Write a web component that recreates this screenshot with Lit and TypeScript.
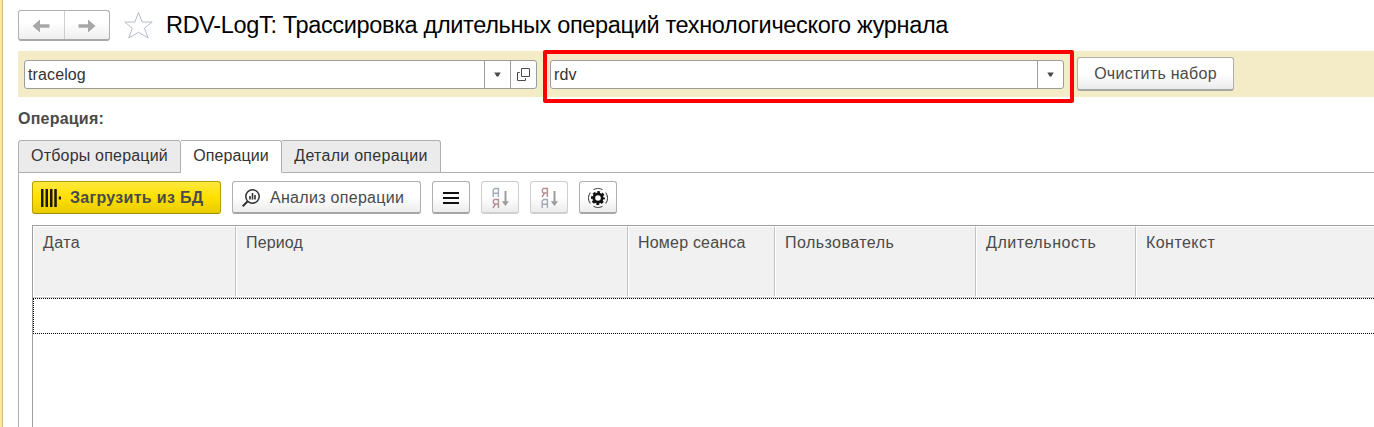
import { LitElement, html, css, svg } from "lit";
import { customElement } from "lit/decorators.js";

const columns = [
  { title: "Дата", cls: "c-date" },
  { title: "Период", cls: "c-period" },
  { title: "Номер сеанса", cls: "c-session" },
  { title: "Пользователь", cls: "c-user" },
  { title: "Длительность", cls: "c-duration" },
  { title: "Контекст", cls: "c-context" },
];

const caret = html`<svg class="caret" width="7" height="5" viewBox="0 0 7 5"><path d="M0.3 0.5h6.4L4.4 4.5H2.6z" fill="#4a4a4a" /></svg>`;

const sortIcon = (top: string, bottom: string) => {
  const a = svg`<path d="M2.2 11V4L3.7 2.5H7.4V11M2.2 7.3H7.4" stroke="#9fabb8" />`;
  const ya = svg`<path d="M7.4 11V2.5H3.4L2.4 3.500V6L3.400 7H7.400M4.600 7L2 11" stroke="#b48f8f" />`;
  const glyph = (k: string) => (k === "a" ? a : ya);
  return html`<svg width="18" height="23" viewBox="0 0 18 23" fill="none" stroke-width="1.400">
    <g>${glyph(top)}</g>
    <g transform="translate(0 11)">${glyph(bottom)}</g>
    <path d="M14.500 5V16" stroke="#9c9c9c" stroke-width="2" />
    <path d="M10.800 15.200h7.200L14.400 20z" fill="#9c9c9c" />
  </svg>`;
};

@customElement("app-root")
export class AppRoot extends LitElement {
  static styles = css`
    :host {
      display: block;
      width: 100%;
      height: 427px;
      overflow: hidden;
      background: #fff;
      font: 16px/20px "Liberation Sans", Arial, sans-serif;
      color: #4a4a4a;
    }
    * { box-sizing: border-box; }
    svg { display: block; flex: none; }
    .window {
      height: 427px;
      border-left: 2px solid #fde99b;
      display: flex;
    }
    .edge { width: 1px; background: #cbbd7c; flex: none; }
    .page {
      flex: 1;
      min-width: 0;
      padding: 10px 0 0 15px;
      display: flex;
      flex-direction: column;
    }
    .heading { display: flex; height: 41px; flex: none; align-items: flex-start; }
    .nav {
      display: flex;
      width: 92px;
      height: 31px;
      border: 1px solid #b0b0b0;
      border-bottom: 2px solid #a8a8a8;
      border-radius: 3px;
      background: linear-gradient(#fff 40%, #efefef);
    }
    .nav span { flex: 1; display: grid; place-items: center; padding-top: 1px; }
    .nav span + span { border-left: 1px solid #cfcfcf; }
    .star { margin: 1px 0 0 14px; }
    .title {
      margin: 0 0 0 12px;
      font-size: 23.5px;
      font-weight: 400;
      line-height: 30px;
      color: #000;
      white-space: nowrap;
      letter-spacing: -0.34px;
    }
    .band {
      height: 46px;
      flex: none;
      background: #f3ecc6;
      display: flex;
      align-items: flex-start;
      padding-left: 6px;
    }
    .field {
      display: flex;
      height: 29px;
      margin-top: 9px;
      border: 1px solid #9c9c9c;
      border-radius: 3px;
      background: #fff;
      color: #333;
      line-height: 27px;
      letter-spacing: 0.12px;
    }
    .field .value { flex: 1; padding-left: 3px; }
    .field .pick { border-left: 1px solid #9c9c9c; width: 26px; display: grid; place-items: center; }
    .caret { margin-right: 1px; }
    .f-source { width: 513px; }
    .f-set { width: 514px; }
    .marked {
      margin: -1px 3px 0 6px;
      width: 531px;
      height: 53px;
      flex: none;
      border: 4px solid #fe0000;
      border-radius: 2px;
      padding-left: 3px;
    }
    .marked .field { margin-top: 6px; }
    .btn {
      display: flex;
      align-items: center;
      justify-content: center;
      height: 33px;
      flex: none;
      border: 1px solid #b0b0b0;
      border-bottom: 2px solid #a6a6a6;
      border-radius: 3px;
      background: linear-gradient(#fff 50%, #ececec);
      padding-top: 1px;
      white-space: nowrap;
    }
    .b-clear { width: 157px; height: 34px; margin-top: 6px; padding-top: 0; letter-spacing: 0.28px; }
    .caption { margin-top: 12px; height: 31px; flex: none; font-weight: 700; letter-spacing: 0.22px; }
    .tabs { display: flex; height: 33px; flex: none; }
    .tab {
      border: 1px solid #b0b0b0;
      border-left: 0;
      background: #ebebeb;
      color: #333;
      line-height: 29px;
      text-align: center;
      border-radius: 0 3px 0 0;
      white-space: nowrap;
    }
    .t-filters { width: 163px; border-left: 1px solid #b0b0b0; border-radius: 3px 3px 0 0; letter-spacing: 0.2px; }
    .t-operations { width: 101px; background: #fff; border-bottom-color: #fff; letter-spacing: 0.1px; }
    .t-details { width: 159px; letter-spacing: 0.28px; }
    .rest { flex: 1; border-bottom: 1px solid #b0b0b0; }
    .panel {
      flex: 1;
      min-height: 0;
      border-left: 1px solid #b0b0b0;
      padding: 8px 0 0 13px;
      display: flex;
      flex-direction: column;
    }
    .tools { display: flex; gap: 11px; height: 44px; flex: none; }
    .b-load {
      width: 189px;
      justify-content: flex-start;
      padding: 0 0 0 8px;
      gap: 9px;
      font-weight: 700;
      letter-spacing: 0.3px;
      border-color: #b5a000;
      border-bottom: 1px solid #a18e00;
      background: linear-gradient(#ffe93f, #ffe000 50%, #e8cc00);
    }
    .b-analyze { width: 189px; justify-content: flex-start; padding-left: 9px; gap: 10px; letter-spacing: 0.3px; }
    .b-icon { width: 38px; }
    .off { border-color: #cfcfcf; }
    .table {
      flex: 1;
      border: 1px solid #9e9e9e;
      border-right: 0;
      border-bottom: 0;
    }
    .head { display: flex; height: 72px; border-bottom: 1px solid #c8c8c8; }
    .cell {
      flex: none;
      border: 1px solid #fff;
      border-right: 1px solid #c4c4c4;
      background: #f1f1f1;
      padding: 6px 0 0 9px;
      white-space: nowrap;
    }
    .c-date { width: 203px; letter-spacing: 0.4px; }
    .c-period { width: 392px; letter-spacing: 0.15px; }
    .c-session { width: 147px; letter-spacing: 0.2px; }
    .c-user { width: 201px; letter-spacing: 0.45px; }
    .c-duration { width: 160px; letter-spacing: 0.55px; }
    .c-context { flex: 1; border-right: 0; letter-spacing: 0.45px; }
    .row { height: 36px; border: 1px dotted #000; border-right: 0; }
  `;

  render() {
    return html`<div class="window">
      <div class="edge"></div>
      <main class="page">
        <header class="heading">
          <div class="nav">
            <span><svg width="18" height="14" viewBox="0 0 18 14"><path d="M0.5 7L8 0.5V5.3H17.5V8.7H8V13.5z" fill="#a8a8a8" /></svg></span>
            <span><svg width="18" height="14" viewBox="0 0 18 14"><path d="M17.5 7L10 0.5V5.3H0.5V8.7H10V13.5z" fill="#a8a8a8" /></svg></span>
          </div>
          <svg class="star" width="30" height="29" viewBox="0 0 30 29">
            <path d="M14.5 1.5L18.1 11H28.2L20.3 17.3L24.2 27L14.5 21.2L4.8 27L8.3 17.3L0.8 11H10.9z" fill="none" stroke="#b5bcc4" />
          </svg>
          <h1 class="title">RDV-LogT: Трассировка длительных операций технологического журнала</h1>
        </header>
        <section class="band">
          <div class="field f-source">
            <span class="value">tracelog</span>
            <span class="pick">${caret}</span>
            <span class="pick">
              <svg width="13" height="13" viewBox="0 0 13 13" fill="none" stroke="#4a4a4a">
                <path d="M4.5 0.5h8v8h-8zM2.8 4.5H0.5v8h8v-2.3" />
              </svg>
            </span>
          </div>
          <div class="marked">
            <div class="field f-set">
              <span class="value">rdv</span>
              <span class="pick">${caret}</span>
            </div>
          </div>
          <div class="btn b-clear">Очистить набор</div>
        </section>
        <div class="caption">Операция:</div>
        <nav class="tabs">
          <div class="tab t-filters">Отборы операций</div>
          <div class="tab t-operations">Операции</div>
          <div class="tab t-details">Детали операции</div>
          <div class="rest"></div>
        </nav>
        <section class="panel">
          <div class="tools">
            <div class="btn b-load">
              <svg width="20" height="18" viewBox="0 0 20 18" fill="#1a1a00">
                <path d="M0 0h2.5v18H0zM4.5 0h2.5v18H4.5zM9 0h2.5v18H9zM13.3 0h2.5v18h-2.5zM17.8 7.5h2.2v3h-2.2z" />
              </svg>
              <span>Загрузить из БД</span>
            </div>
            <div class="btn b-analyze">
              <svg width="18" height="18" viewBox="0 0 18 18" fill="none" stroke="#333">
                <circle cx="10.5" cy="7.5" r="6.7" stroke-width="1.5" />
                <path d="M5.7 12.3L0.7 17.3" stroke-width="2" />
                <path d="M8 7v3.5M10.5 4v6.5M13 6v4.5" stroke-width="1.6" />
              </svg>
              <span>Анализ операции</span>
            </div>
            <div class="btn b-icon">
              <svg width="16" height="13" viewBox="0 0 16 13"><path d="M0 1h16v2H0zM0 6h16v2H0zM0 11h16v2H0z" fill="#111" /></svg>
            </div>
            <div class="btn b-icon off">${sortIcon("a", "ya")}</div>
            <div class="btn b-icon off">${sortIcon("ya", "a")}</div>
            <div class="btn b-icon">
              <svg width="20" height="20" viewBox="0 0 20 20" fill="none" stroke="#111">
                <circle cx="10" cy="10" r="4.200" stroke-width="2.8" />
                <circle cx="10" cy="10" r="6" stroke-width="2" stroke-dasharray="2.8 1.912" stroke-dashoffset="1.4" />
                <path d="M5.5 1.800A9.300 9.300 0 0 1 14.5 1.800M17.600 4.500A9.300 9.300 0 0 1 17.600 15.500M14.500 18.200A9.300 9.300 0 0 1 5.500 18.200M2.400 15.500A9.300 9.300 0 0 1 2.400 4.500" stroke="#555" stroke-width="1.100" />
              </svg>
            </div>
          </div>
          <div class="table">
            <div class="head">${columns.map((c) => html`<div class="cell ${c.cls}">${c.title}</div>`)}</div>
            <div class="row"></div>
          </div>
        </section>
      </main>
    </div>`;
  }
}
